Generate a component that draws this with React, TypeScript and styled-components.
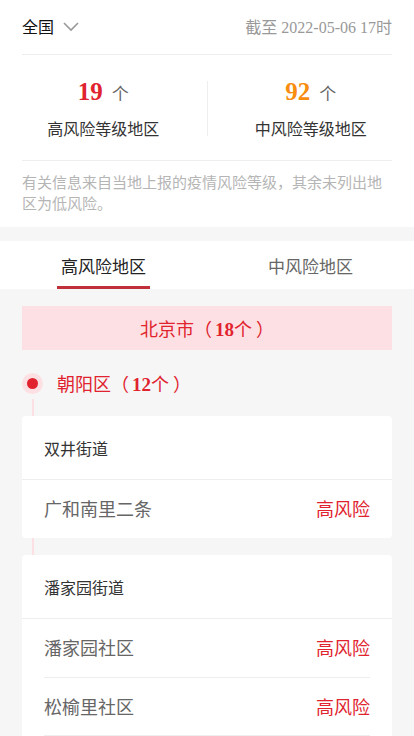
import React, { useState } from "react"
import styled, { createGlobalStyle } from "styled-components"

const GlobalStyle = createGlobalStyle`
  html, body {
    margin: 0;
    padding: 0;
    background: #f6f6f6;
  }
  body {
    font-family: "Liberation Serif", "Noto Sans CJK SC", serif;
  }
  * { box-sizing: border-box; }
`

const RED = "#e0232e"

const areas = [
  {
    street: "双井街道",
    places: ["广和南里二条"],
  },
  {
    street: "潘家园街道",
    places: ["潘家园社区", "松榆里社区", "武圣东里社区"],
  },
]

const App = () => {
  const [tab, setTab] = useState(0)
  return (
    <Page>
      <GlobalStyle />
      <Summary>
        <TopBar>
          <RegionPicker>
            全国
            <svg width="18" height="12" viewBox="0 0 18 12">
              <polyline points="2,2 9,9 16,2" fill="none" stroke="#999" strokeWidth="1.6" />
            </svg>
          </RegionPicker>
          <UpdatedAt>截至 2022-05-06 17时</UpdatedAt>
        </TopBar>
        <Stats>
          <Stat>
            <Count>
              <Num color={RED}>19</Num>
              <Unit>个</Unit>
            </Count>
            <StatLabel>高风险等级地区</StatLabel>
          </Stat>
          <StatDivider />
          <Stat>
            <Count>
              <Num color="#f78c0f">92</Num>
              <Unit>个</Unit>
            </Count>
            <StatLabel>中风险等级地区</StatLabel>
          </Stat>
        </Stats>
        <Note>有关信息来自当地上报的疫情风险等级，其余未列出地区为低风险。</Note>
      </Summary>

      <Tabs>
        {["高风险地区", "中风险地区"].map((t, i) => (
          <Tab key={t} active={i === tab} onClick={() => setTab(i)}>
            {t}
          </Tab>
        ))}
      </Tabs>

      <Body>
        <Province>
          <span>
            北京市（<Total><b>18</b>个</Total>）
          </span>
        </Province>
        <District>
          <Dot />
          <span>
            朝阳区（<Total><b>12</b>个</Total>）
          </span>
        </District>
        <Timeline>
          {areas.map(area => (
            <Card key={area.street}>
              <Street>{area.street}</Street>
              {area.places.map(p => (
                <PlaceRow key={p}>
                  <PlaceName>{p}</PlaceName>
                  <Level>高风险</Level>
                </PlaceRow>
              ))}
            </Card>
          ))}
        </Timeline>
      </Body>
    </Page>
  )
}

export default App

const Page = styled.div`
  width: 414px;
  min-height: 736px;
  background: #f6f6f6;
`

const Summary = styled.div`
  background: #fff;
  padding: 0 22px 12px;
  margin-bottom: 14px;
`

const TopBar = styled.div`
  height: 55px;
  display: flex;
  align-items: center;
  justify-content: space-between;
  border-bottom: 1px solid #eee;
  padding-bottom: 2px;
`

const RegionPicker = styled.div`
  display: flex;
  align-items: center;
  gap: 8px;
  font-size: 16px;
  color: #111;
  svg {
    margin-top: 2px;
  }
`

const UpdatedAt = styled.div`
  font-size: 16px;
  color: #999;
`

const Stats = styled.div`
  display: flex;
  align-items: center;
  height: 106px;
  margin: 0 -22px;
  position: relative;
  &::after {
    content: "";
    position: absolute;
    left: 22px;
    right: 22px;
    bottom: 0;
    height: 1px;
    background: #eee;
  }
`

const Stat = styled.div`
  flex: 1;
  display: flex;
  flex-direction: column;
  align-items: center;
  gap: 10px;
  padding-top: 2px;
`

const StatDivider = styled.div`
  width: 1px;
  height: 55px;
  background: #eee;
`

const Count = styled.div`
  display: flex;
  align-items: baseline;
  gap: 9px;
  height: 28px;
`

const Num = styled.span<{ color: string }>`
  font-size: 25px;
  font-weight: bold;
  color: ${p => p.color};
`

const Unit = styled.span`
  font-size: 17px;
  color: #666;
`

const StatLabel = styled.div`
  font-size: 16px;
  color: #333;
`

const Note = styled.p`
  margin: 0;
  padding-top: 12px;
  font-size: 15px;
  line-height: 21px;
  color: #b5b5b5;
`

const Tabs = styled.div`
  display: flex;
  height: 48px;
  background: #fff;
`

const Tab = styled.div<{ active: boolean }>`
  flex: 1;
  display: flex;
  justify-content: center;
  align-items: center;
  font-size: 17px;
  color: ${p => (p.active ? "#222" : "#666")};
  position: relative;
  cursor: pointer;
  &::after {
    content: "";
    display: ${p => (p.active ? "block" : "none")};
    position: absolute;
    bottom: 0;
    left: 50%;
    width: 93px;
    height: 3px;
    margin-left: -47px;
    background: #c0303b;
  }
`

const Body = styled.div`
  padding: 17px 22px 20px;
`

const Total = styled.span`
  margin: 0 4px 0 3px;
  b {
    font-size: 19px;
  }
`

const Province = styled.div`
  height: 44px;
  display: flex;
  justify-content: center;
  align-items: center;
  background: #fde0e3;
  color: ${RED};
  font-size: 18px;
`

const District = styled.div`
  display: flex;
  align-items: center;
  gap: 14px;
  height: 66px;
  color: ${RED};
  font-size: 18px;
`

const Dot = styled.span`
  width: 21px;
  height: 21px;
  border-radius: 50%;
  background: #fde0e3;
  display: flex;
  align-items: center;
  justify-content: center;
  &::after {
    content: "";
    width: 11px;
    height: 11px;
    border-radius: 50%;
    background: ${RED};
  }
`

const Timeline = styled.div`
  position: relative;
  display: flex;
  flex-direction: column;
  gap: 17px;
  &::before {
    content: "";
    position: absolute;
    left: 10px;
    top: -17px;
    bottom: 0;
    width: 2px;
    background: #fde0e3;
  }
`

const Card = styled.div`
  position: relative;
  background: #fff;
  border-radius: 4px;
  padding: 0 22px;
`

const Street = styled.div`
  height: 64px;
  margin: 0 -22px;
  padding: 0 22px;
  display: flex;
  align-items: center;
  font-size: 16px;
  color: #333;
  border-bottom: 1px solid #eee;
`

const PlaceRow = styled.div`
  height: 58px;
  display: flex;
  align-items: center;
  justify-content: space-between;
  font-size: 18px;
  padding-bottom: 2px;
  & + & {
    border-top: 1px solid #eee;
  }
`

const PlaceName = styled.span`
  color: #666;
`

const Level = styled.span`
  color: ${RED};
`
